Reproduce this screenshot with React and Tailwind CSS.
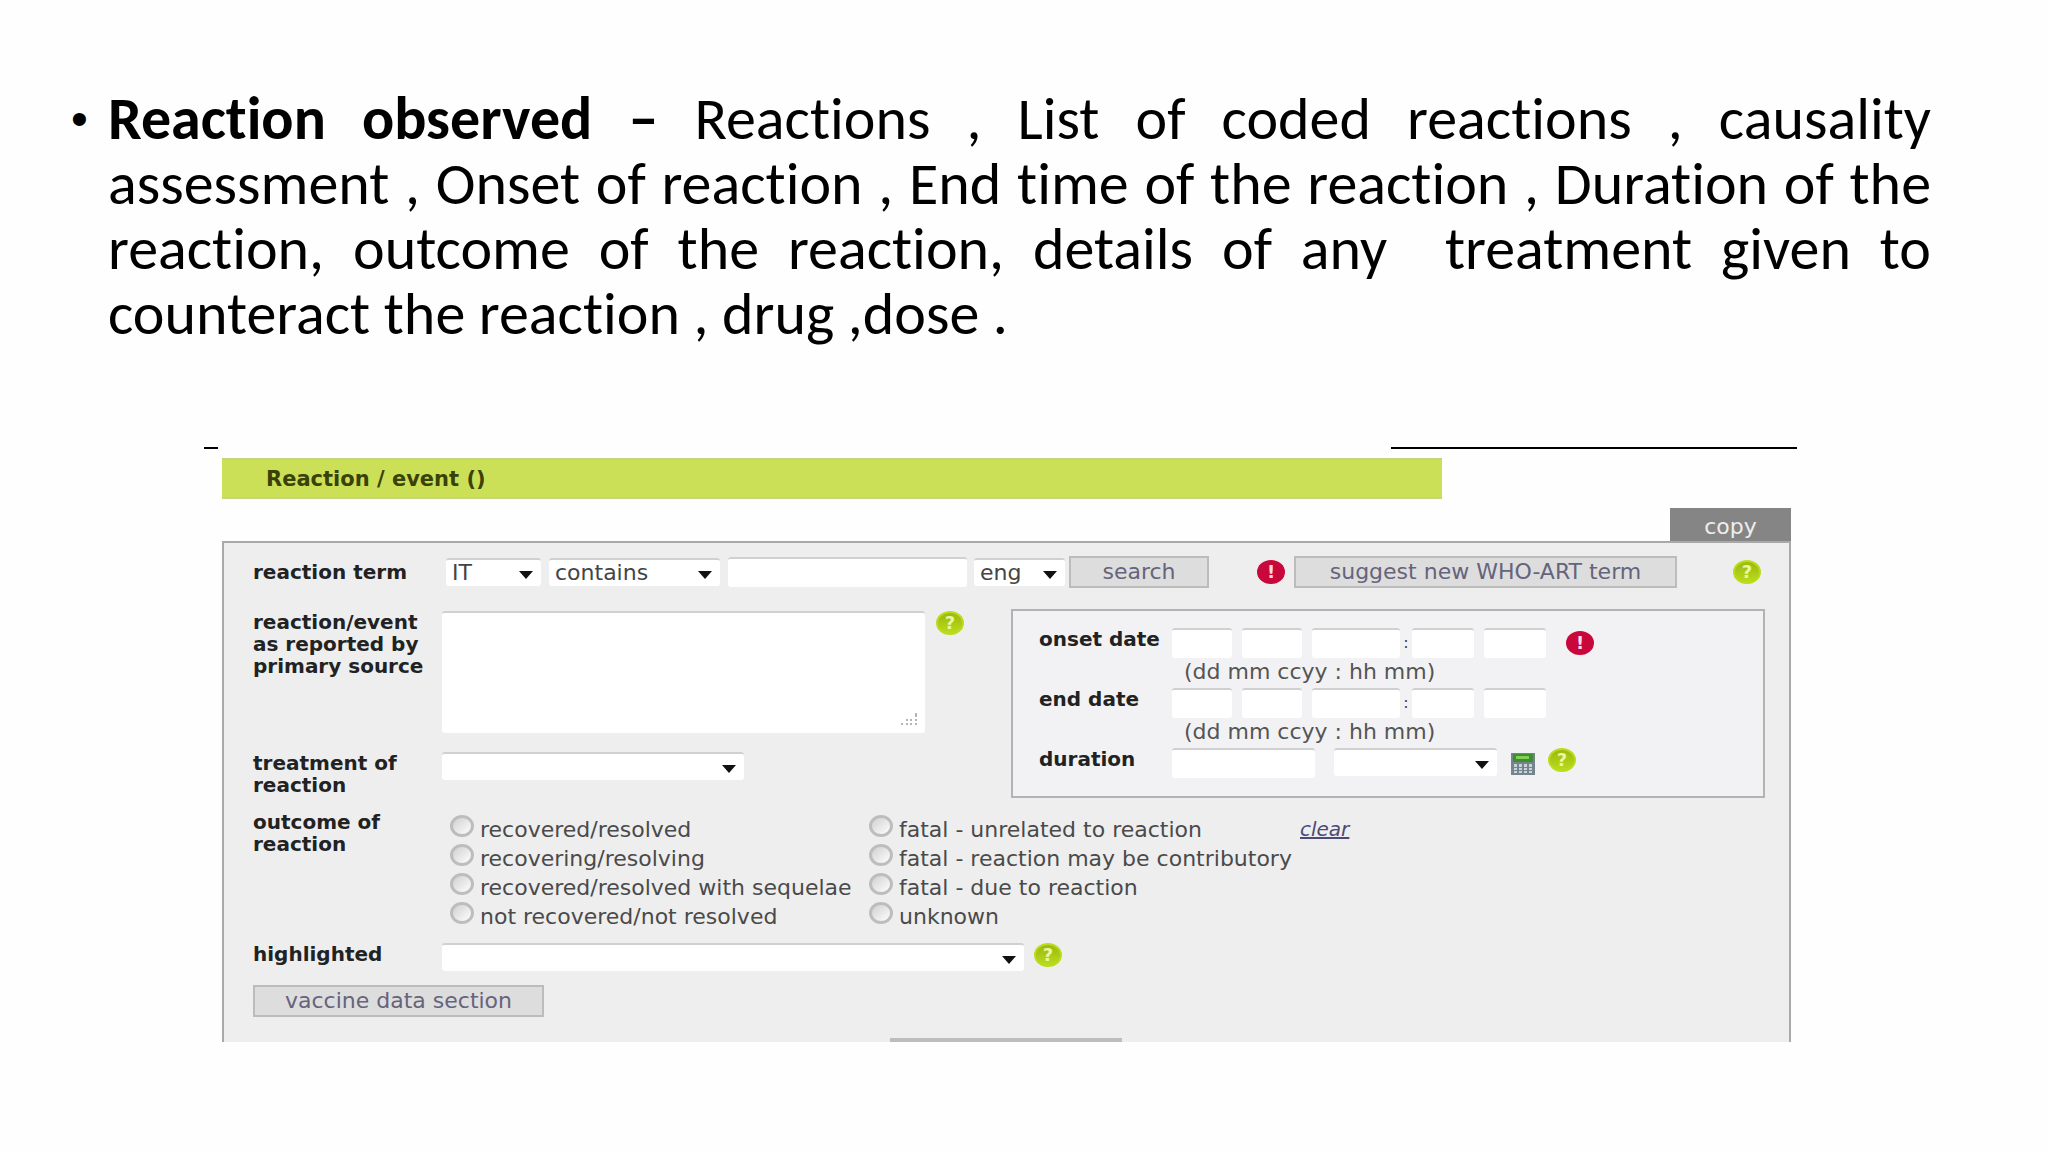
import { useState } from 'react';

const LEFT_OUTCOMES = [
  'recovered/resolved',
  'recovering/resolving',
  'recovered/resolved with sequelae',
  'not recovered/not resolved',
];

const RIGHT_OUTCOMES = [
  'fatal - unrelated to reaction',
  'fatal - reaction may be contributory',
  'fatal - due to reaction',
  'unknown',
];

const fieldBase = 'border-t-2 border-[#d0d0d0] bg-white rounded-[3px] focus:outline-none';
const labelBase = 'shrink-0 text-xl leading-[22px] font-bold text-[#222]';
const buttonBase = 'h-8 border-2 border-[#bcbcbc] bg-[#dddddd] text-[#66637c] leading-7 whitespace-nowrap';

function Select({ id, label, options, className }) {
  return (
    <div className={`relative ${className}`}>
      <select
        id={id}
        aria-label={label}
        className={`${fieldBase} appearance-none block w-full h-7 pl-[6px] pr-7 leading-[26px] text-[#444]`}
      >
        {options.map((o) => <option key={o}>{o}</option>)}
      </select>
      <svg className="absolute right-2 top-[13px] w-[14px] h-2 pointer-events-none" viewBox="0 0 14 8">
        <path d="M0 0H14L7 8Z" fill="#111" />
      </svg>
    </div>
  );
}

function Help() {
  return (
    <button
      type="button"
      aria-label="Help"
      className="shrink-0 w-7 h-6 rounded-[50%] border-2 border-[#b9dc1c] bg-linear-to-b from-[#9cb80f] to-[#b9dc1c] text-[#e9f7a0] text-lg leading-5 font-bold text-center"
    >
      ?
    </button>
  );
}

function Required() {
  return (
    <span className="shrink-0 block w-7 h-6 rounded-[50%] bg-[#c8073a] text-[#ffd9e2] text-lg leading-6 font-bold text-center">
      !
    </span>
  );
}

function Calculator() {
  return (
    <svg className="w-6 h-6" viewBox="0 0 24 24">
      <rect x="0" y="1" width="24" height="22" fill="#74858f" />
      <rect x="2" y="2" width="20" height="8" fill="#3f8f2e" />
      <rect x="5" y="4" width="13" height="3" fill="#7ed058" />
      {[3, 8, 13, 18].map((x) => (
        <g key={x} fill="#c9d3d8">
          <rect x={x} y="12" width="3" height="3" />
          <rect x={x} y="16" width="3" height="2" />
          <rect x={x} y="19" width="3" height="2" />
        </g>
      ))}
    </svg>
  );
}

function DateRow({ label, required }) {
  return (
    <fieldset className="flex h-[60px]">
      <legend className={`${labelBase} float-left w-[133px]`}>{label}</legend>
      <div>
        <div className="flex items-center h-[30px]">
          <input aria-label={`${label} day`} className={`${fieldBase} w-[60px] h-[30px] mr-[10px]`} />
          <input aria-label={`${label} month`} className={`${fieldBase} w-[60px] h-[30px] mr-[10px]`} />
          <input aria-label={`${label} year`} className={`${fieldBase} w-[88px] h-[30px]`} />
          <span className="w-3 text-center text-base text-[#444]">:</span>
          <input aria-label={`${label} hour`} className={`${fieldBase} w-[62px] h-[30px] mr-[10px]`} />
          <input aria-label={`${label} minute`} className={`${fieldBase} w-[62px] h-[30px] mr-5`} />
          {required && <Required />}
        </div>
        <p className="pl-3 leading-7 text-[#555]">(dd mm ccyy : hh mm)</p>
      </div>
    </fieldset>
  );
}

function Outcomes({ items, value, onChange }) {
  return (
    <div className="flex flex-col">
      {items.map((o) => (
        <label key={o} className="flex h-[29px] items-start whitespace-nowrap">
          <input
            type="radio"
            name="outcome"
            checked={value === o}
            onChange={() => onChange(o)}
            className="appearance-none shrink-0 w-6 h-[22px] mr-[6px] rounded-[50%] border-3 border-[#bdbdbd] bg-linear-to-br from-[#d0d0d0] to-white checked:bg-[#666]"
          />
          <span className="pt-[3px] leading-6 text-[#4a4a4a]">{o}</span>
        </label>
      ))}
    </div>
  );
}

export default function App() {
  const [outcome, setOutcome] = useState('');

  return (
    <main className="min-h-screen bg-[#fefefe] pt-[86px] font-['DejaVu_Sans',sans-serif] text-[22px]">
      {/* Slide text */}
      <ul className="pl-[71px] pr-[117px] list-none font-[Carlito,Lato,sans-serif] text-6xl leading-[65px] text-black">
        <li className="flex items-start">
          <span className="w-[37px] shrink-0 text-5xl leading-[65px] font-['Liberation_Sans',sans-serif]">•</span>
          <p className="text-justify leading-[65px] [font-variant-ligatures:none]">
            <b>Reaction observed –</b> Reactions , List of coded reactions , causality assessment , Onset
            of reaction , End time of the reaction , Duration of the reaction, outcome of the reaction,
            details of any&nbsp; treatment given to counteract the reaction , drug ,dose .
          </p>
        </li>
      </ul>

      {/* Rule, hidden behind the title bar in the middle */}
      <div className="flex justify-between mt-[101px] ml-[204px] mr-[251px]">
        <div className="w-[14px] h-[2px] bg-black" />
        <div className="w-[406px] h-[2px] bg-black" />
      </div>

      <section className="mt-[9px] ml-[222px] mr-[257px]">
        <h2 className="w-full max-w-[1220px] h-[41px] pl-11 border-y-2 border-[#c6d47a] bg-[#cbe057] text-[21px] font-bold leading-[39px] text-[#3a4208]">
          Reaction / event ()
        </h2>

        <div className="flex justify-end mt-[9px]">
          <button type="button" className="w-[121px] h-[33px] pt-1 bg-[#858585] text-[#eee] leading-7">
            copy
          </button>
        </div>

        <form className="h-[501px] flex flex-col border-2 border-b-0 border-[#a9a9a9] bg-[#eeeeee] pl-[29px] pr-6 pt-[13px]">
          {/* Term search */}
          <div className="flex items-center h-8">
            <label htmlFor="term" className={`${labelBase} w-[193px]`}>reaction term</label>
            <Select label="term language" options={['IT']} className="w-[95px] mr-2" />
            <Select label="match" options={['contains']} className="w-[171px] mr-2" />
            <input id="term" className={`${fieldBase} w-[239px] h-[30px] mr-[7px]`} />
            <Select label="language" options={['eng']} className="w-[91px] mr-1" />
            <button type="button" className={`${buttonBase} w-[140px]`}>search</button>
            <div className="ml-12 mr-[9px]"><Required /></div>
            <button type="button" className={`${buttonBase} w-[383px]`}>suggest new WHO-ART term</button>
            <div className="ml-auto mr-1 flex"><Help /></div>
          </div>

          <div className="grid grid-cols-[758fr_754fr] mt-[21px]">
            <div>
              <div className="flex items-start pt-[2px]">
                <label htmlFor="reported" className={`${labelBase} w-[189px]`}>
                  reaction/event<br />as reported by<br />primary source
                </label>
                <div className="relative w-[483px] h-[122px] mr-[11px]">
                  <textarea id="reported" className={`${fieldBase} resize-none block w-full h-full p-2`} />
                  <svg className="absolute right-2 bottom-2 w-4 h-3 pointer-events-none" viewBox="0 0 16 12" fill="#b5b5b5">
                    <path d="M0 10h2v2H0zM5 10h2v2H5zM5 6h2v2H5zM9 10h2v2H9zM9 6h2v2H9zM14 10h2v2h-2zM14 6h2v2h-2zM14 0h2v4h-2z" />
                  </svg>
                </div>
                <Help />
              </div>
              <div className="flex items-start mt-[19px]">
                <label htmlFor="treatment" className={`${labelBase} w-[189px]`}>
                  treatment of<br />reaction
                </label>
                <Select id="treatment" options={['']} className="w-[302px]" />
              </div>
            </div>

            {/* Dates */}
            <div className="h-[189px] border-2 border-[#b3b3b3] bg-[#f2f2f4] pt-[17px] pl-[26px]">
              <DateRow label="onset date" required />
              <DateRow label="end date" />
              <div className="flex items-start">
                <label htmlFor="duration" className={`${labelBase} w-[133px]`}>duration</label>
                <input id="duration" className={`${fieldBase} w-[143px] h-[30px] mr-[19px]`} />
                <Select label="duration unit" options={['']} className="w-[163px] mr-[14px]" />
                <button type="button" aria-label="Calculate duration" className="mt-1 mr-[13px]"><Calculator /></button>
                <Help />
              </div>
            </div>
          </div>

          <div className="flex items-start mt-[13px]">
            <p className={`${labelBase} w-[197px]`}>
              outcome of<br />reaction
            </p>
            <div className="w-[419px] pt-1"><Outcomes items={LEFT_OUTCOMES} value={outcome} onChange={setOutcome} /></div>
            <div className="w-[431px] pt-1"><Outcomes items={RIGHT_OUTCOMES} value={outcome} onChange={setOutcome} /></div>
            <a
              href="#clear"
              onClick={(e) => { e.preventDefault(); setOutcome(''); }}
              className="pt-[6px] text-xl leading-6 italic underline text-[#4b4a78]"
            >
              clear
            </a>
          </div>

          <div className="flex items-start h-7 mt-3">
            <label htmlFor="highlighted" className={`${labelBase} w-[189px]`}>highlighted</label>
            <Select id="highlighted" options={['']} className="w-[582px] mr-[10px]" />
            <Help />
          </div>

          <button type="button" className={`${buttonBase} w-[291px] mt-[14px]`}>vaccine data section</button>

          {/* Top edge of the next button, cut off by the panel */}
          <div className="mt-auto ml-[637px] w-[232px] h-1 bg-[#bdbdbd]" />
        </form>
      </section>
    </main>
  );
}
